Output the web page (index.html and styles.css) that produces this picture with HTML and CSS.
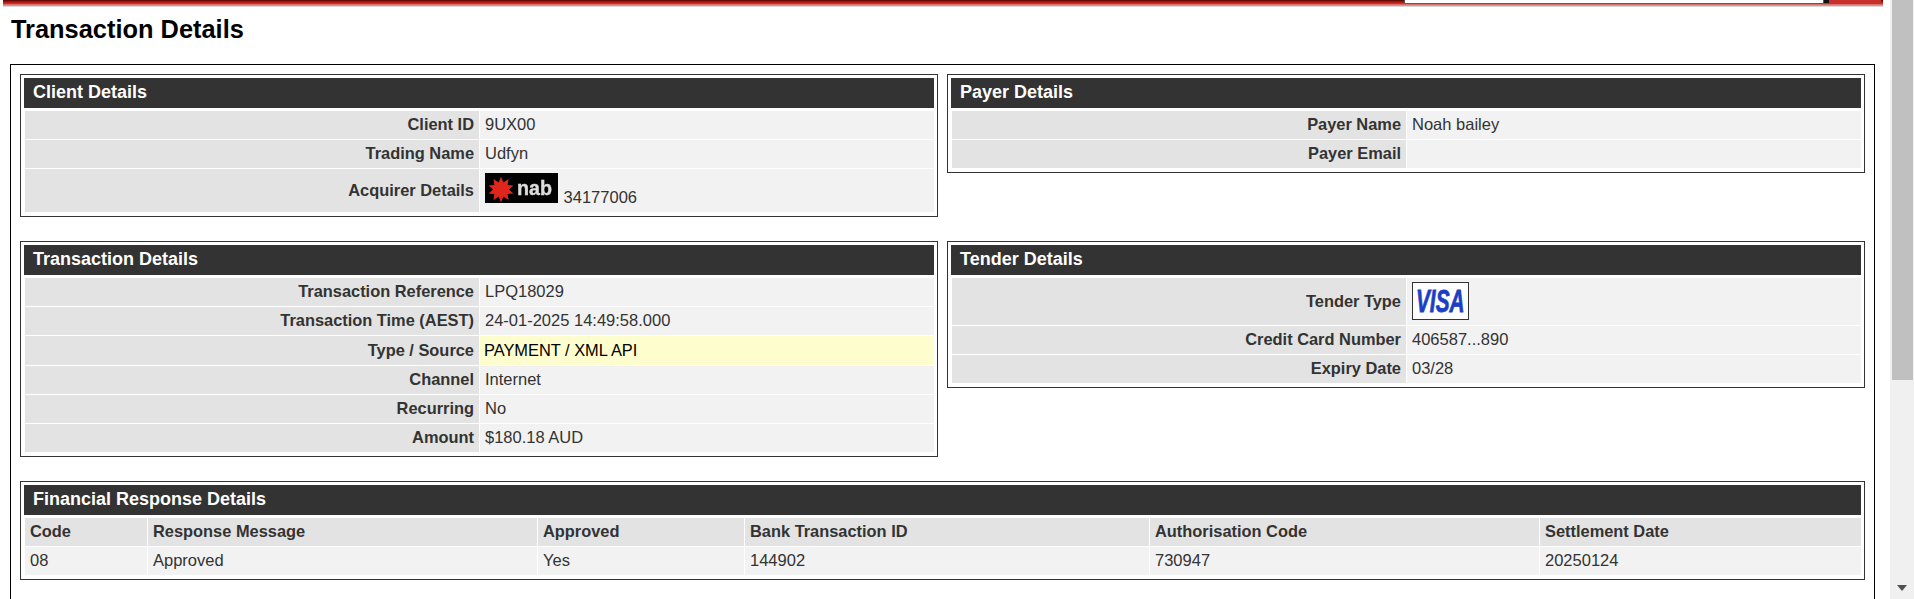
FILE: index.html
```html
<!DOCTYPE html>
<html lang="en">
<head>
<meta charset="utf-8">
<title>Transaction Details</title>
<link rel="stylesheet" href="styles.css">
</head>
<body>
<div class="app">
  <main class="main">
    <header class="bar">
      <div class="bar-top">
        <div class="bar-fill"></div>
        <div class="bar-search"></div>
        <div class="bar-gap"></div>
        <div class="bar-button"></div>
        <div class="bar-end"></div>
      </div>
      <div class="bar-strip"></div>
    </header>
    <h1 class="title">Transaction Details</h1>
    <div class="outer">
      <section class="box">
        <h2 class="box-head">Client Details</h2>
        <table class="kv">
          <colgroup><col class="col-label"><col></colgroup>
          <tr><th>Client ID</th><td>9UX00</td></tr>
          <tr><th>Trading Name</th><td>Udfyn</td></tr>
          <tr class="row-nab"><th>Acquirer Details</th><td>
            <svg class="logo-nab" width="73" height="30" viewBox="0 0 73 30" role="img" aria-label="nab">
              <defs><filter id="soft" x="-10%" y="-10%" width="120%" height="120%"><feGaussianBlur stdDeviation="0.4"/></filter></defs>
              <rect width="73" height="30" fill="#000"/>
              <polygon filter="url(#soft)" fill="#e0281a" points="16,3.5 18.3,9.4 23.6,6 22.6,11.9 28.4,12.5 24,16.5 28.4,20.5 22.6,21.1 23.6,27 18.3,23.6 16,29.5 13.7,23.6 8.4,27 9.4,21.1 3.6,20.5 8,16.5 3.6,12.5 9.4,11.9 8.4,6 13.7,9.4"/>
              <text class="nab-text" filter="url(#soft)" x="32" y="22" textLength="35" lengthAdjust="spacingAndGlyphs">nab</text>
            </svg>
            34177006</td></tr>
        </table>
      </section>
      <section class="box">
        <h2 class="box-head">Payer Details</h2>
        <table class="kv">
          <colgroup><col class="col-label"><col></colgroup>
          <tr><th>Payer Name</th><td>Noah bailey</td></tr>
          <tr><th>Payer Email</th><td></td></tr>
        </table>
      </section>
      <section class="box">
        <h2 class="box-head">Transaction Details</h2>
        <table class="kv">
          <colgroup><col class="col-label"><col></colgroup>
          <tr><th>Transaction Reference</th><td>LPQ18029</td></tr>
          <tr><th>Transaction Time (AEST)</th><td>24-01-2025 14:49:58.000</td></tr>
          <tr class="row-type"><th>Type / Source</th><td class="hl">PAYMENT / XML API</td></tr>
          <tr><th>Channel</th><td>Internet</td></tr>
          <tr><th>Recurring</th><td>No</td></tr>
          <tr><th>Amount</th><td>$180.18 AUD</td></tr>
        </table>
      </section>
      <section class="box">
        <h2 class="box-head">Tender Details</h2>
        <table class="kv">
          <colgroup><col class="col-label"><col></colgroup>
          <tr class="row-visa"><th>Tender Type</th><td>
            <svg class="logo-visa" width="57" height="38" viewBox="0 0 57 38" role="img" aria-label="VISA">
              <rect x="0.5" y="0.5" width="56" height="37" fill="#fff" stroke="#333"/>
              <text class="visa-text" transform="translate(4 30) scale(0.65 1)">VISA</text>
            </svg></td></tr>
          <tr><th>Credit Card Number</th><td>406587...890</td></tr>
          <tr><th>Expiry Date</th><td>03/28</td></tr>
        </table>
      </section>
      <section class="box box-wide">
        <h2 class="box-head">Financial Response Details</h2>
        <table class="kv fin">
          <colgroup><col class="c1"><col class="c2"><col class="c3"><col class="c4"><col class="c5"><col></colgroup>
          <tr><th>Code</th><th>Response Message</th><th>Approved</th><th>Bank Transaction ID</th><th>Authorisation Code</th><th>Settlement Date</th></tr>
          <tr><td>08</td><td>Approved</td><td>Yes</td><td>144902</td><td>730947</td><td>20250124</td></tr>
        </table>
      </section>
    </div>
  </main>
  <aside class="scrollbar">
    <div class="thumb"></div>
    <div class="arrow"></div>
  </aside>
</div>
</body>
</html>
```
FILE: styles.css
```css
* { box-sizing: border-box; }
html, body { margin: 0; padding: 0; height: 100%; background: #fff; }
body { font-family: "Liberation Sans", Arial, sans-serif; color: #333; overflow: hidden; }

.app { display: flex; height: 100vh; overflow: hidden; }
.main { flex: 1 1 auto; min-width: 0; }

.bar { margin: 0 7px 0 3px; height: 7px; }
.bar-top { display: flex; height: 3px; }
.bar-fill, .bar-gap, .bar-end { background: linear-gradient(#4a0806, #a81410 60%, #d0201c); }
.bar-fill { flex: 1 1 auto; }
.bar-search { width: 420px; background: #fff; box-shadow: inset 1px 0 0 #555, inset -1px 0 0 #555; }
.bar-gap { width: 5px; background: #111; }
.bar-button { width: 52px; background: #c8302c; }
.bar-end { width: 2px; }
.bar-strip { height: 4px; background: linear-gradient(#c8302c 0, #c8302c 25%, #d8716e 25%, #d8716e 50%, #a8a8a8 50%, #a8a8a8 75%, #d8d8d8 75%); }

.title { margin: 8px 0 20px 11px; font-size: 25.4px; line-height: 29px; font-weight: 700; color: #000; }

.outer {
  margin: 0 15px 0 10px;
  height: 600px;
  padding: 9px 9px 0;
  border: 1px solid #000;
  display: grid;
  grid-template-columns: 918px 918px;
  gap: 24px 9px;
  align-items: start;
  align-content: start;
}

.box { border: 1px solid #333; padding: 3px; }
.box-wide { grid-column: 1 / -1; }
.box-head {
  margin: 0;
  height: 30px;
  line-height: 28px;
  padding-left: 9px;
  background: #333;
  color: #fff;
  font-size: 18px;
  font-weight: 700;
}

.kv {
  width: calc(100% + 1px);
  margin-top: 2px;
  table-layout: fixed;
  border-collapse: separate;
  border-spacing: 1px;
  font-size: 16.5px;
}
.kv th, .kv td { height: 28px; padding: 0 5px 2px; line-height: 18px; white-space: nowrap; }
.kv th { background: #e3e3e3; text-align: right; font-weight: 700; font-size: 16.4px; }
.kv td { background: #f2f2f2; text-align: left; }

.col-label { width: 454px; }

.row-nab th { height: 43px; padding-bottom: 1px; }
.row-nab td { height: 43px; padding-top: 4px; padding-bottom: 0; vertical-align: top; }
.row-visa th { height: 47px; padding-bottom: 1px; }
.row-visa td { height: 47px; padding-bottom: 1px; }
.row-type th, .row-type td { height: 29px; padding-bottom: 1px; }
.kv td.hl { background: #fdfdcd; color: #000; font-size: 16.4px; padding-left: 4px; }

.logo-nab { vertical-align: baseline; margin-right: 1px; }
.logo-visa { vertical-align: middle; }
.nab-text { font-family: "Liberation Sans", sans-serif; font-weight: 700; font-size: 20.5px; fill: #dcdcdc; stroke: #dcdcdc; stroke-width: 0.4px; }
.visa-text { font-family: "Liberation Sans", sans-serif; font-weight: 700; font-style: italic; font-size: 32px; fill: #1b3fc4; stroke: #1b3fc4; stroke-width: 0.8px; }

.fin .c1 { width: 122px; }
.fin .c2 { width: 389px; }
.fin .c3 { width: 206px; }
.fin .c4 { width: 404px; }
.fin .c5 { width: 389px; }
.fin th { text-align: left; }

.scrollbar {
  flex: 0 0 24px;
  background: #f0f0f0;
  padding: 0 1px 0 2px;
  display: flex;
  flex-direction: column;
  justify-content: space-between;
  align-items: stretch;
}
.thumb { height: 380px; background: #c0c0c0; }
.arrow {
  align-self: center;
  margin: 0 0 8px -1px;
  width: 0;
  height: 0;
  border-left: 5px solid transparent;
  border-right: 5px solid transparent;
  border-top: 6px solid #505050;
}
```
